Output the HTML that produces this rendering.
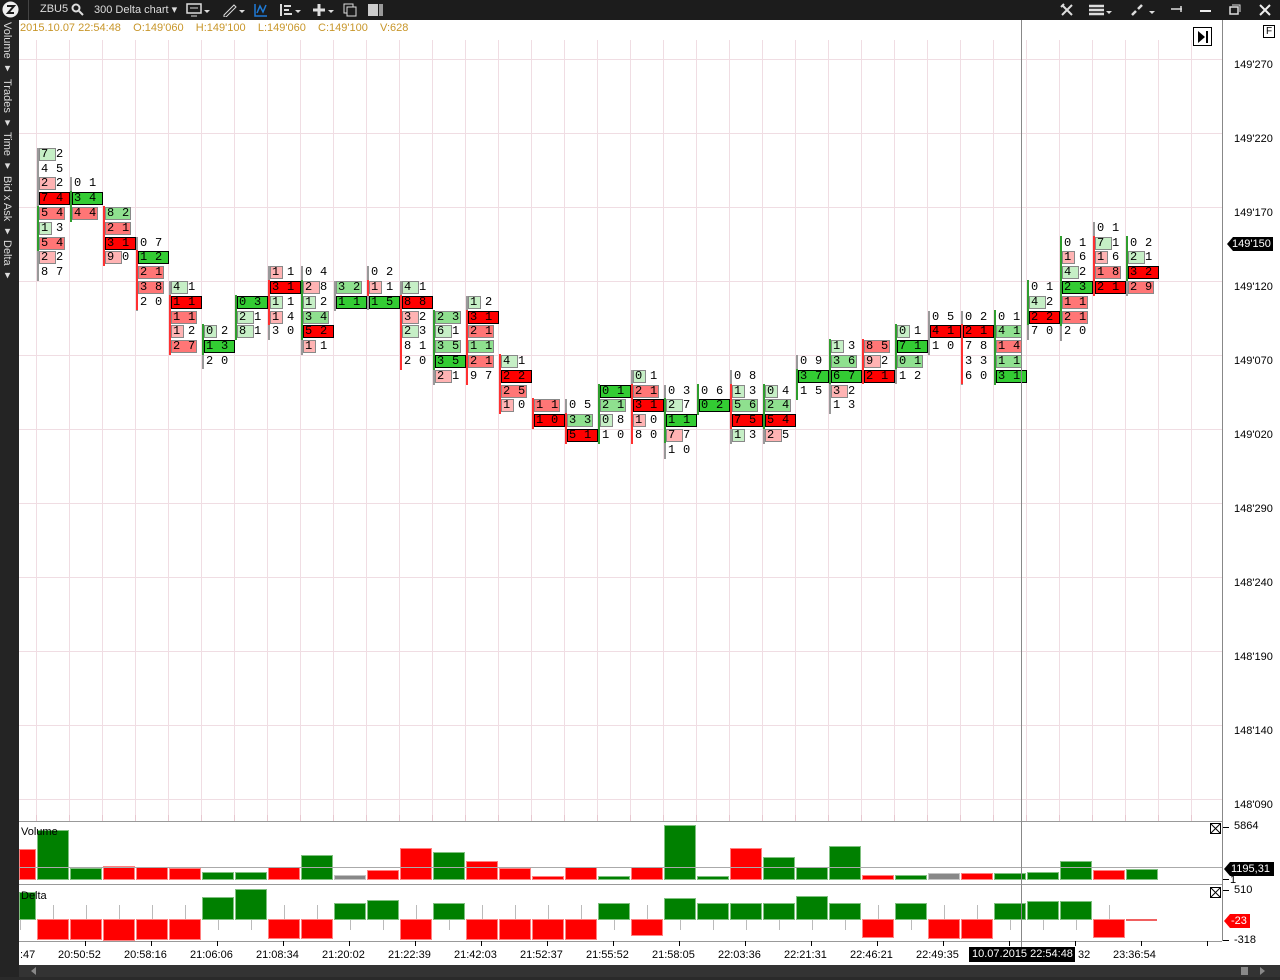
<!DOCTYPE html>
<html><head><meta charset="utf-8">
<style>
*{margin:0;padding:0;box-sizing:border-box}
body{width:1280px;height:980px;background:#fff;position:relative;overflow:hidden;font-family:"Liberation Sans",sans-serif}
.a{position:absolute}
#top{left:0;top:0;width:1280px;height:20px;background:#1c1c1c;color:#ddd;font-size:12px}
#side{left:0;top:20px;width:19px;height:960px;background:#242424}
.vt{position:absolute;left:1px;writing-mode:vertical-rl;color:#ddd;font-size:11px;white-space:nowrap}
.c{position:absolute;height:13px;font-family:"Liberation Mono",monospace;font-size:12px;line-height:13px;color:#000;white-space:pre}
.bx{position:absolute;top:0;height:13px}
.t{position:absolute;top:0}
.pl{position:absolute;font-size:11px;color:#000;left:1234px}
.tl{position:absolute;top:949px;font-size:11px;color:#000}
.lab{z-index:5}
</style></head><body>
<div id="top" class="a">
 <svg class="a" style="left:2px;top:1px" width="17" height="17"><circle cx="8.5" cy="8.5" r="8" fill="#eee"/><path d="M5 5h7l-6 7h6" stroke="#1c1c1c" stroke-width="2" fill="none"/></svg>
 <div class="a" style="left:28px;top:0;width:1px;height:20px;background:#444"></div>
 <span class="a" style="left:40px;top:3px;font-size:11px">ZBU5</span>
 <svg class="a" style="left:71px;top:3px" width="13" height="13"><circle cx="5" cy="5" r="3.5" stroke="#ddd" stroke-width="2" fill="none"/><path d="M8 8l4 4" stroke="#ddd" stroke-width="2"/></svg>
 <span class="a" style="left:94px;top:3px;font-size:11px">300 Delta chart ▾</span>
 <svg class="a" style="left:186px;top:3px" width="24" height="14"><rect x="1" y="1" width="14" height="9" stroke="#ddd" fill="none" stroke-width="1.5"/><path d="M5 13h6M4 5h8" stroke="#ddd"/><path d="M18 7l3 3 3-3z" fill="#ddd"/></svg>
 <svg class="a" style="left:222px;top:3px" width="24" height="14"><path d="M2 12l10-10 2 2-10 10H2z" stroke="#ddd" fill="none"/><path d="M17 7l3 3 3-3z" fill="#ddd"/></svg>
 <svg class="a" style="left:254px;top:3px" width="14" height="14"><path d="M1 1v12h12" stroke="#1e7ad6" fill="none" stroke-width="1.5"/><path d="M3 10l3-7 3 6 3-7" stroke="#1e7ad6" fill="none" stroke-width="1.5"/></svg>
 <svg class="a" style="left:279px;top:3px" width="24" height="14"><path d="M2 1v12M5 3h7M5 7h5M5 11h8" stroke="#ddd" stroke-width="2"/><path d="M16 7l3 3 3-3z" fill="#ddd"/></svg>
 <svg class="a" style="left:312px;top:3px" width="24" height="14"><path d="M7 1v12M1 7h12" stroke="#ddd" stroke-width="3"/><path d="M16 7l3 3 3-3z" fill="#ddd"/></svg>
 <svg class="a" style="left:343px;top:3px" width="14" height="14"><rect x="1" y="1" width="9" height="9" stroke="#ddd" fill="none"/><rect x="4" y="4" width="9" height="9" stroke="#ddd" fill="#1c1c1c"/></svg>
 <svg class="a" style="left:368px;top:3px" width="15" height="14"><rect x="0" y="1" width="10" height="12" fill="#ccc"/><rect x="11" y="1" width="4" height="12" fill="#999"/></svg>
 <svg class="a" style="left:1060px;top:3px" width="14" height="14"><path d="M2 12l10-10M2 2l10 10M1 4l3-3" stroke="#ddd" stroke-width="2"/></svg>
 <svg class="a" style="left:1088px;top:3px" width="24" height="14"><path d="M1 3h15M1 7h15M1 11h15" stroke="#ddd" stroke-width="2.5"/><path d="M18 8l3 3 3-3z" fill="#ddd"/></svg>
 <svg class="a" style="left:1130px;top:3px" width="26" height="14"><path d="M2 12l4-4M8 6l4-4" stroke="#ddd" stroke-width="2.5"/><path d="M19 8l3 3 3-3z" fill="#ddd"/></svg>
 <svg class="a" style="left:1170px;top:5px" width="14" height="8"><path d="M1 4h11M11 1v6" stroke="#ddd" stroke-width="1.5"/></svg>
 <div class="a" style="left:1200px;top:10px;width:11px;height:2px;background:#eee"></div>
 <svg class="a" style="left:1229px;top:4px" width="12" height="12"><rect x="1" y="3" width="8" height="7" stroke="#ddd" fill="none" stroke-width="1.5"/><path d="M3 1h8v7" stroke="#ddd" fill="none"/></svg>
 <svg class="a" style="left:1259px;top:4px" width="12" height="12"><path d="M1 1l10 10M11 1L1 11" stroke="#eee" stroke-width="2"/></svg>
</div>
<div id="side" class="a">
 <div class="vt" style="top:2px">Volume ▾</div>
 <div class="vt" style="top:59px">Trades ▾</div>
 <div class="vt" style="top:112px">Time ▾</div>
 <div class="vt" style="top:156px">Bid x Ask ▾</div>
 <div class="vt" style="top:220px">Delta ▾</div>
</div>
<div class="a" style="left:20px;top:22px;font-size:11px;color:#c8962a;white-space:pre">2015.10.07 22:54:48    O:149'060    H:149'100    L:149'060    C:149'100    V:628</div>
<div id="grid"></div>
<div class="a" style="left:1222px;top:20px;width:1px;height:921px;background:#888"></div>
<div class="a" style="left:1021px;top:20px;width:1px;height:930px;background:#888;z-index:4"></div>
<div class="a" style="left:1193px;top:27px;width:19px;height:19px;border:1px solid #000;background:#fff"><svg width="17" height="17"><path d="M4 3l7 6-7 6z" fill="#000"/><rect x="12" y="3" width="2" height="12" fill="#000"/></svg></div>
<div class="a" style="left:1263px;top:25px;width:12px;height:13px;border:1px solid #000;font-size:10px;line-height:11px;text-align:center">F</div>
<div class="a" style="left:19px;top:821px;width:1203px;height:1px;background:#999"></div>
<div class="a" style="left:19px;top:884px;width:1203px;height:1px;background:#999"></div>
<div class="a" style="left:19px;top:941px;width:1203px;height:1px;background:#999"></div>
<div class="a" style="left:19px;top:867px;width:1203px;height:1px;background:#aaa;z-index:3"></div>
<div class="a lab" style="left:21px;top:826px;font-size:11px">Volume</div>
<div class="a lab" style="left:21px;top:890px;font-size:11px">Delta</div>
<svg class="a" style="left:1210px;top:823px" width="11" height="11"><rect x="0.5" y="0.5" width="10" height="10" fill="#fff" stroke="#000"/><path d="M1 1l9 9M10 1l-9 9" stroke="#000"/></svg>
<svg class="a" style="left:1210px;top:887px" width="11" height="11"><rect x="0.5" y="0.5" width="10" height="10" fill="#fff" stroke="#000"/><path d="M1 1l9 9M10 1l-9 9" stroke="#000"/></svg>
<div class="a" style="left:1227px;top:237px;width:46px;height:14px;background:#000;color:#fff;font-size:11px;line-height:14px;padding-left:5px;clip-path:polygon(6px 0,100% 0,100% 100%,6px 100%,0 50%)">149'150</div>
<div class="a" style="left:1224px;top:862px;width:50px;height:14px;background:#000;color:#fff;font-size:11px;line-height:14px;padding-left:7px;clip-path:polygon(6px 0,100% 0,100% 100%,6px 100%,0 50%)">1195,31</div>
<div class="a" style="left:1224px;top:914px;width:26px;height:14px;background:#f00;color:#fff;font-size:11px;line-height:14px;padding-left:7px;clip-path:polygon(6px 0,100% 0,100% 100%,6px 100%,0 50%)">-23</div>
<div class="a" style="left:19px;top:942px;width:1203px;height:23px;background:#fff"></div>
<div class="a" style="left:19px;top:965px;width:1261px;height:15px;background:#333"></div>
<div class="a" style="left:0;top:977px;width:1280px;height:3px;background:#2a2a2a"></div>
<svg class="a" style="left:30px;top:966px" width="8" height="10"><path d="M6 1v8L1 5z" fill="#888"/></svg>
<div class="a" style="left:1241px;top:967px;width:7px;height:8px;background:#888"></div>
<svg class="a" style="left:1259px;top:966px" width="8" height="10"><path d="M1 1v8l5-4z" fill="#888"/></svg>
<script>
function E(h){document.body.insertAdjacentHTML('beforeend',h)}
var g='';
for(var x=36;x<1222;x+=33)g+='<div class="a" style="left:'+x+'px;top:40px;width:1px;height:781px;background:#f0dde3"></div>';
for(var y=59;y<821;y+=74)g+='<div class="a" style="left:19px;top:'+y+'px;width:1203px;height:1px;background:#f0dde3"></div>';
for(var x=36;x<1222;x+=33)g+='<div class="a" style="left:'+x+'px;top:815px;width:1px;height:6px;background:#e8c8d0"></div>';
E(g);
var pr=[[66,"149'270"],[140,"149'220"],[214,"149'170"],[288,"149'120"],[362,"149'070"],[436,"149'020"],[510,"148'290"],[584,"148'240"],[658,"148'190"],[732,"148'140"],[806,"148'090"]];
var a='';pr.forEach(function(p){a+='<div class="pl" style="top:'+(p[0]-7)+'px">'+p[1]+'</div>'});
a+='<div class="pl" style="top:820px">5864</div><div class="pl" style="top:874px;left:1230px">1</div><div class="pl" style="top:884px">510</div><div class="pl" style="top:934px">-318</div>';
[827,879,890,940].forEach(function(y){a+='<div class="a" style="left:1223px;top:'+y+'px;width:6px;height:1px;background:#000"></div>'});
E(a);
var D=[
[0,-4,"72g 45 22r 74X 54R 13g 54R 22r 87",4,6,'G'],
[1,-2,"01 34S 44R",1,2,'G'],
[2,0,"82G 21R 31X 90r",0,3,'R'],
[3,2,"07 12S 21R 38R 20",1,4,'R'],
[4,5,"41g 11X 11R 12r 27R",1,4,'R'],
[5,8,"02g 13S 20",0,1,'G'],
[6,6,"03S 21g 81g",0,2,'G'],
[7,4,"11r 31X 11g 14r 30",1,3,'R'],
[8,4,"04 28r 12g 34G 52X 11r",1,4,'G'],
[9,5,"32G 11S",0,0,'N'],
[10,4,"02 11r 15S",1,1,'R'],
[11,5,"41g 88X 32r 23g 81 20",1,5,'R'],
[12,7,"23G 61g 35G 35S 21r",0,3,'G'],
[13,6,"12g 31X 21R 11G 21R 97",1,5,'R'],
[14,10,"41g 22X 25R 10r",0,3,'R'],
[15,13,"11R 10X",0,1,'R'],
[16,13,"05 33G 51X",1,2,'R'],
[17,12,"01S 21G 08g 10",0,3,'G'],
[18,11,"01g 21R 31X 10r 80",1,4,'R'],
[19,12,"03 27g 11S 77r 10",1,3,'G'],
[20,12,"06 02S",0,1,'G'],
[21,11,"08 13g 56G 75X 13g",1,3,'R'],
[22,12,"04g 24G 54X 25r",0,2,'G'],
[23,10,"09 37S 15",1,2,'G'],
[24,9,"13g 36G 67S 32r 13",0,2,'G'],
[25,9,"85R 92r 21X",0,2,'R'],
[26,8,"01g 71S 01G 12",0,2,'G'],
[27,7,"05 41X 10",1,1,'N'],
[28,7,"02 21X 78 33 60",1,4,'R'],
[29,7,"01 41G 14R 11G 31S",0,4,'G'],
[30,5,"01 42g 22X 70",0,2,'G'],
[31,2,"01 16r 42g 23S 11R 21R 20",0,5,'G'],
[32,1,"01 71g 16r 18R 21X",1,4,'R'],
[33,2,"02 21g 32X 29R",0,2,'G']];
var W={g:15,r:15,G:26,R:26,S:31,X:31};
var C={g:'#c6efc6',r:'#ffb3b3',G:'#8fe08f',R:'#ff7676',S:'#33cc33',X:'#ff0000'};
var h='';
D.forEach(function(d){
 var x=36+33*d[0]+1, cs=d[2].split(' ');
 var top0=214+14.8*d[1]-7;
 var n=cs.length;
 h+='<div class="a" style="left:'+(x)+'px;top:'+Math.round(top0)+'px;width:2px;height:'+Math.round(14.8*n)+'px;background:#999"></div>';
 if(d[5]!='N'){var bt=top0+14.8*d[3]-1;h+='<div class="a" style="left:'+x+'px;top:'+Math.round(bt)+'px;width:2px;height:'+Math.round(14.8*(d[4]-d[3]+1)+1)+'px;background:'+(d[5]=='G'?'#2e9e2e':'#ff3030')+'"></div>';}
 cs.forEach(function(c,i){
  var y=Math.round(top0+14.8*i), t=c[2], s='';
  if(t){var w=W[t];var bd=(t=='S'||t=='X')?'1px solid #000':'1px solid #888';
   var ww=w; if(t=='g'||t=='r'){ww=(c[0]=='1'||c[0]=='0')?13:17;}
   s='<div class="bx" style="left:0;width:'+ww+'px;background:'+C[t]+';border:'+bd+'"></div>';}
  h+='<div class="c" style="left:'+(x+2)+'px;top:'+y+'px;width:32px">'+s+'<span class="t" style="left:2px">'+c[0]+'</span><span class="t" style="left:17px">'+c[1]+'</span></div>';
 });
});
E(h);
var V=[[-1,'r',849],[0,'g',830],[1,'g',868],[2,'r',866],[3,'r',867],[4,'r',868],[5,'g',872],[6,'g',872],[7,'r',867],[8,'g',855],[9,'n',875],[10,'r',870],[11,'r',848],[12,'g',852],[13,'r',861],[14,'r',868],[15,'r',876],[16,'r',867],[17,'g',876],[18,'r',867],[19,'g',825],[20,'g',876],[21,'r',848],[22,'g',857],[23,'g',867],[24,'g',846],[25,'r',875],[26,'g',875],[27,'n',873],[28,'r',873],[29,'g',873],[30,'g',872],[31,'g',861],[32,'r',870],[33,'g',869]];
var VC={r:'#ff0000',g:'#008000',n:'#888'};
var b='';
V.forEach(function(v){var x=36+33*v[0]+1;var l=Math.max(x,19);var w=x+32-l;
 b+='<div class="a" style="left:'+l+'px;top:'+v[2]+'px;width:'+w+'px;height:'+(880-v[2])+'px;background:'+VC[v[1]]+';border:1px solid rgba(255,255,255,.5)"></div>'});
var Dl=[[-1,892],[0,-940],[1,-940],[2,-941],[3,-940],[4,-940],[5,897],[6,889],[7,-939],[8,-939],[9,903],[10,900],[11,-940],[12,903],[13,-940],[14,-940],[15,-940],[16,-940],[17,903],[18,-936],[19,898],[20,903],[21,903],[22,903],[23,896],[24,903],[25,-938],[26,903],[27,-939],[28,-939],[29,903],[30,901],[31,901],[32,-938]];
Dl.forEach(function(v){var x=36+33*v[0]+1;var l=Math.max(x,19);var w=x+32-l;
 b+='<div class="a" style="left:'+(x+16)+'px;top:905px;width:1px;height:25px;background:#bbb"></div>';
 if(v[1]>0)b+='<div class="a" style="left:'+l+'px;top:'+v[1]+'px;width:'+w+'px;height:'+(920-v[1])+'px;background:#008000;border:1px solid rgba(255,255,255,.5)"></div>';
 else b+='<div class="a" style="left:'+l+'px;top:919px;width:'+w+'px;height:'+(-v[1]-919)+'px;background:#ff0000;border:1px solid rgba(255,255,255,.5)"></div>'});
b+='<div class="a" style="left:1126px;top:919px;width:31px;height:2px;background:#f06060"></div>';
E(b);
var T=[[20,':47'],[58,'20:50:52'],[124,'20:58:16'],[190,'21:06:06'],[256,'21:08:34'],[322,'21:20:02'],[388,'21:22:39'],[454,'21:42:03'],[520,'21:52:37'],[586,'21:55:52'],[652,'21:58:05'],[718,'22:03:36'],[784,'22:21:31'],[850,'22:46:21'],[916,'22:49:35'],[1078,'32'],[1113,'23:36:54']];
var tt='';T.forEach(function(t){tt+='<div class="tl" style="left:'+t[0]+'px">'+t[1]+'</div>'});
for(var x=85;x<1222;x+=66)tt+='<div class="a" style="left:'+x+'px;top:941px;width:1px;height:5px;background:#000"></div>';
tt+='<div class="a" style="left:969px;top:947px;width:106px;height:15px;background:#000;color:#fff;font-size:11px;line-height:15px;padding-left:3px;z-index:5">10.07.2015 22:54:48</div>';
E(tt);
</script>
</body></html>
